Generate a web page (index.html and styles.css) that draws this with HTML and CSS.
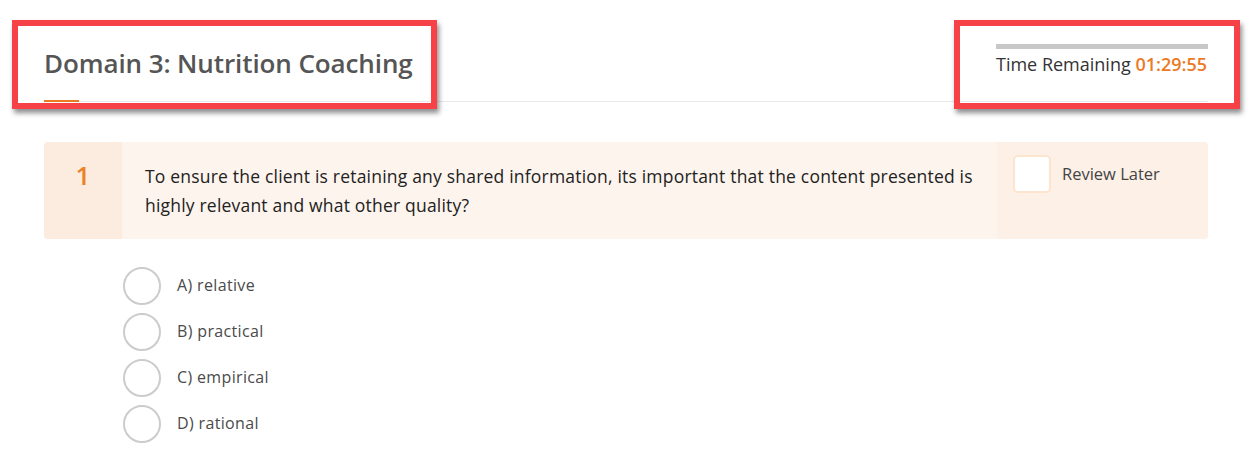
FILE: index.html
```html
<!DOCTYPE html>
<html>
<head>
<meta charset="utf-8">
<link rel="stylesheet" href="styles.css">
</head>
<body>
<div class="page">
  <header class="header">
    <div class="title-wrap">
      <h1 class="title">Domain 3: Nutrition Coaching</h1>
      <div class="title-accent"></div>
    </div>
    <div class="timer">
      <div class="timer-bar"></div>
      <div class="timer-text">Time Remaining <span class="timer-value">01:29:55</span></div>
    </div>
  </header>

  <section class="question">
    <div class="q-num">1</div>
    <div class="q-text">To ensure the client is retaining any shared information, its important that the content presented is highly relevant and what other quality?</div>
    <div class="q-review">
      <span class="checkbox"></span>
      <span class="review-label">Review Later</span>
    </div>
  </section>

  <ul class="options">
    <li class="option"><span class="radio"></span><span class="opt-label">A) relative</span></li>
    <li class="option"><span class="radio"></span><span class="opt-label">B) practical</span></li>
    <li class="option"><span class="radio"></span><span class="opt-label">C) empirical</span></li>
    <li class="option"><span class="radio"></span><span class="opt-label">D) rational</span></li>
  </ul>
</div>
<div class="annot annot-title"></div>
<div class="annot annot-timer"></div>
</body>
</html>
```

FILE: styles.css
```css
* { box-sizing: border-box; }
html, body { margin: 0; padding: 0; background: #fff; }
body {
  font-family: "Open Sans", "Liberation Sans", sans-serif;
  color: #333;
  position: relative;
  width: 1252px;
  height: 466px;
  overflow: hidden;
}
.page {
  padding: 0 44px;
}
.header {
  display: flex;
  justify-content: space-between;
  align-items: stretch;
  height: 102px;
  border-bottom: 1px solid #e9e9e9;
}
.title-wrap {
  display: flex;
  flex-direction: column;
  justify-content: flex-end;
}
.title {
  margin: 0;
  font-size: 26px;
  font-weight: 600;
  color: #555;
  line-height: 36px;
  padding-bottom: 19px;
  letter-spacing: -0.1px;
}
.title-accent {
  width: 35px;
  height: 2px;
  background: #e87a22;
  margin-bottom: -1px;
}
.timer {
  width: 212px;
  padding-top: 44px;
  display: flex;
  flex-direction: column;
}
.timer-bar {
  height: 5px;
  background: #c8c8c8;
}
.timer-text {
  font-size: 18px;
  line-height: 22px;
  margin-top: 4px;
  color: #333;
  white-space: nowrap;
}
.timer-value {
  color: #ec7a26;
  font-weight: 600;
}
.question {
  margin-top: 40px;
  display: flex;
  background: #fdf4ed;
  border-radius: 4px;
  overflow: hidden;
  min-height: 97px;
}
.q-num {
  width: 78px;
  flex: none;
  background: #fcecdf;
  color: #ec8129;
  font-size: 26px;
  font-weight: 600;
  text-align: center;
  padding-top: 17px;
  line-height: 32px;
}
.q-text {
  flex: 1;
  padding: 20px 8px 0 23px;
  font-size: 17.5px;
  letter-spacing: 0.2px;
  line-height: 29px;
  color: #222;
}
.q-review {
  width: 211px;
  flex: none;
  background: #fcf0e7;
  display: flex;
  align-items: flex-start;
  padding: 13px 0 0 16px;
  gap: 11px;
}
.checkbox {
  width: 38px;
  height: 38px;
  background: #fff;
  border: 2px solid #fde4cf;
  border-radius: 5px;
  flex: none;
}
.review-label {
  font-size: 16.5px;
  line-height: 22px;
  padding-top: 8px;
  color: #444;
}
.options {
  list-style: none;
  margin: 28px 0 0 0;
  padding: 0 0 0 79px;
  display: flex;
  flex-direction: column;
  gap: 8px;
}
.option {
  display: flex;
  align-items: center;
  gap: 16px;
}
.radio {
  width: 38px;
  height: 38px;
  border: 2px solid #cccccc;
  border-radius: 50%;
  flex: none;
}
.opt-label {
  font-size: 16px;
  letter-spacing: 0.35px;
  color: #4a4a4a;
  line-height: 22px;
  margin-top: -2px;
}
.annot {
  position: absolute;
  border: 6px solid #f64146;
  box-shadow: 2px 4px 5px rgba(0, 0, 0, 0.45);
}
.annot-title {
  left: 12px;
  top: 20px;
  width: 425px;
  height: 89px;
}
.annot-timer {
  left: 954px;
  top: 20px;
  width: 286px;
  height: 89px;
}
```
